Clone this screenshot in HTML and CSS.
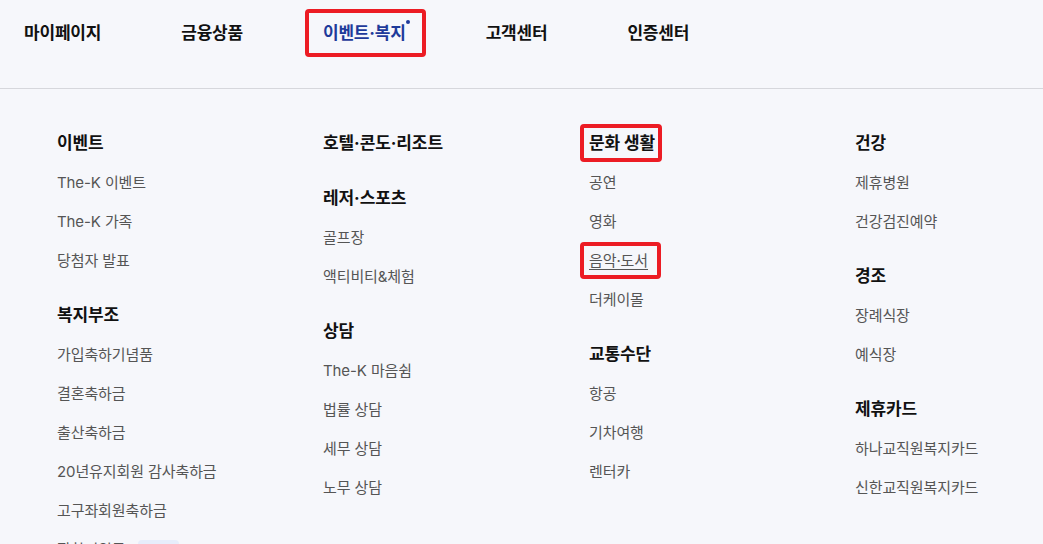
FILE: index.html
```html
<!DOCTYPE html>
<html lang="ko">
<head>
  <meta charset="utf-8">
  <title>이벤트·복지</title>
  <link rel="stylesheet" href="styles.css">
</head>
<body>
  <!-- Top navigation -->
  <header class="gnb">
    <ul class="gnb-list">
      <li><a class="gnb-link" href="#">마이페이지</a></li>
      <li><a class="gnb-link" href="#">금융상품</a></li>
      <li><a class="gnb-link active marked" href="#">이벤트·복지</a></li>
      <li><a class="gnb-link" href="#">고객센터</a></li>
      <li><a class="gnb-link" href="#">인증센터</a></li>
    </ul>
  </header>

  <!-- Dropdown menu -->
  <div class="submenu">
    <div class="submenu-col">
      <div class="group">
        <h3 class="group-title">이벤트</h3>
        <ul class="group-list">
          <li><a href="#">The-K 이벤트</a></li>
          <li><a href="#">The-K 가족</a></li>
          <li><a href="#">당첨자 발표</a></li>
        </ul>
      </div>
      <div class="group">
        <h3 class="group-title">복지부조</h3>
        <ul class="group-list">
          <li><a href="#">가입축하기념품</a></li>
          <li><a href="#">결혼축하금</a></li>
          <li><a href="#">출산축하금</a></li>
          <li><a href="#">20년유지회원 감사축하금</a></li>
          <li><a href="#">고구좌회원축하금</a></li>
          <li><a href="#">장학지원금</a><span class="badge">NEW</span></li>
        </ul>
      </div>
    </div>

    <div class="submenu-col">
      <div class="group">
        <h3 class="group-title">호텔·콘도·리조트</h3>
      </div>
      <div class="group">
        <h3 class="group-title">레저·스포츠</h3>
        <ul class="group-list">
          <li><a href="#">골프장</a></li>
          <li><a href="#">액티비티&amp;체험</a></li>
        </ul>
      </div>
      <div class="group">
        <h3 class="group-title">상담</h3>
        <ul class="group-list">
          <li><a href="#">The-K 마음쉼</a></li>
          <li><a href="#">법률 상담</a></li>
          <li><a href="#">세무 상담</a></li>
          <li><a href="#">노무 상담</a></li>
        </ul>
      </div>
    </div>

    <div class="submenu-col">
      <div class="group">
        <h3 class="group-title"><span class="marked">문화 생활</span></h3>
        <ul class="group-list">
          <li><a href="#">공연</a></li>
          <li><a href="#">영화</a></li>
          <li><a class="marked current" href="#">음악·도서</a></li>
          <li><a href="#">더케이몰</a></li>
        </ul>
      </div>
      <div class="group">
        <h3 class="group-title">교통수단</h3>
        <ul class="group-list">
          <li><a href="#">항공</a></li>
          <li><a href="#">기차여행</a></li>
          <li><a href="#">렌터카</a></li>
        </ul>
      </div>
    </div>

    <div class="submenu-col">
      <div class="group">
        <h3 class="group-title">건강</h3>
        <ul class="group-list">
          <li><a href="#">제휴병원</a></li>
          <li><a href="#">건강검진예약</a></li>
        </ul>
      </div>
      <div class="group">
        <h3 class="group-title">경조</h3>
        <ul class="group-list">
          <li><a href="#">장례식장</a></li>
          <li><a href="#">예식장</a></li>
        </ul>
      </div>
      <div class="group">
        <h3 class="group-title">제휴카드</h3>
        <ul class="group-list">
          <li><a href="#">하나교직원복지카드</a></li>
          <li><a href="#">신한교직원복지카드</a></li>
        </ul>
      </div>
    </div>
  </div>
</body>
</html>
```

FILE: styles.css
```css
/* Base */
body {
  margin: 0;
  background-color: #f6f7fb;
  color: #111;
  font-family: Inter, "Noto Sans CJK KR", sans-serif;
  overflow: hidden;
}

ul {
  list-style: none;
  margin: 0;
  padding: 0;
}

a {
  color: inherit;
  text-decoration: none;
}

/* Top navigation */
.gnb {
  height: 89px;
  border-bottom: 1px solid #d6d7dc;
  box-sizing: border-box;
  padding: 9px 0 0 24px;
}

.gnb-list {
  display: flex;
  gap: 80px;
}

.gnb-link {
  display: block;
  position: relative;
  line-height: 48px;
  font-size: 17px;
  font-weight: 700;
  letter-spacing: -0.2px;
  color: #111;
}

.gnb-link.active {
  color: #1e3a9a;
}

/* small dot next to the active menu */
.gnb-link.active:before {
  content: "";
  position: absolute;
  top: 11px;
  right: -4px;
  width: 4px;
  height: 4px;
  border-radius: 50%;
  background-color: #1e3a9a;
}

/* Red highlight boxes */
.marked {
  position: relative;
}

.marked:after {
  content: "";
  position: absolute;
  top: 1px;
  bottom: 1px;
  left: -9px;
  right: -7px;
  border: 4px solid #ec1c24;
  border-radius: 4px;
}

.gnb-link.marked:after {
  top: 0;
  bottom: 0;
  left: -18px;
  right: -20px;
}

/* Dropdown */
.submenu {
  display: grid;
  grid-template-columns: repeat(4, 266px);
  padding: 34px 0 0 57px;
}

.group {
  margin-bottom: 15px;
}

.group-title {
  margin: 0;
  line-height: 40px;
  font-size: 17px;
  font-weight: 700;
  letter-spacing: -0.1px;
  color: #111;
}

.group-title .marked {
  display: inline-block;
}

.group-list li {
  line-height: 39px;
  font-size: 15px;
  letter-spacing: -0.1px;
  color: #555;
}

.group-list .marked {
  display: inline-block;
}

.group-list .marked:after {
  right: -13px;
}

.group-list .current {
  text-decoration: underline;
  text-underline-offset: 3px;
}

.badge {
  display: inline-block;
  margin-left: 12px;
  padding: 0 8px;
  line-height: 22px;
  border-radius: 4px;
  background-color: #e7edfb;
  color: #3a5bc7;
  font-size: 11px;
  vertical-align: middle;
}
```
